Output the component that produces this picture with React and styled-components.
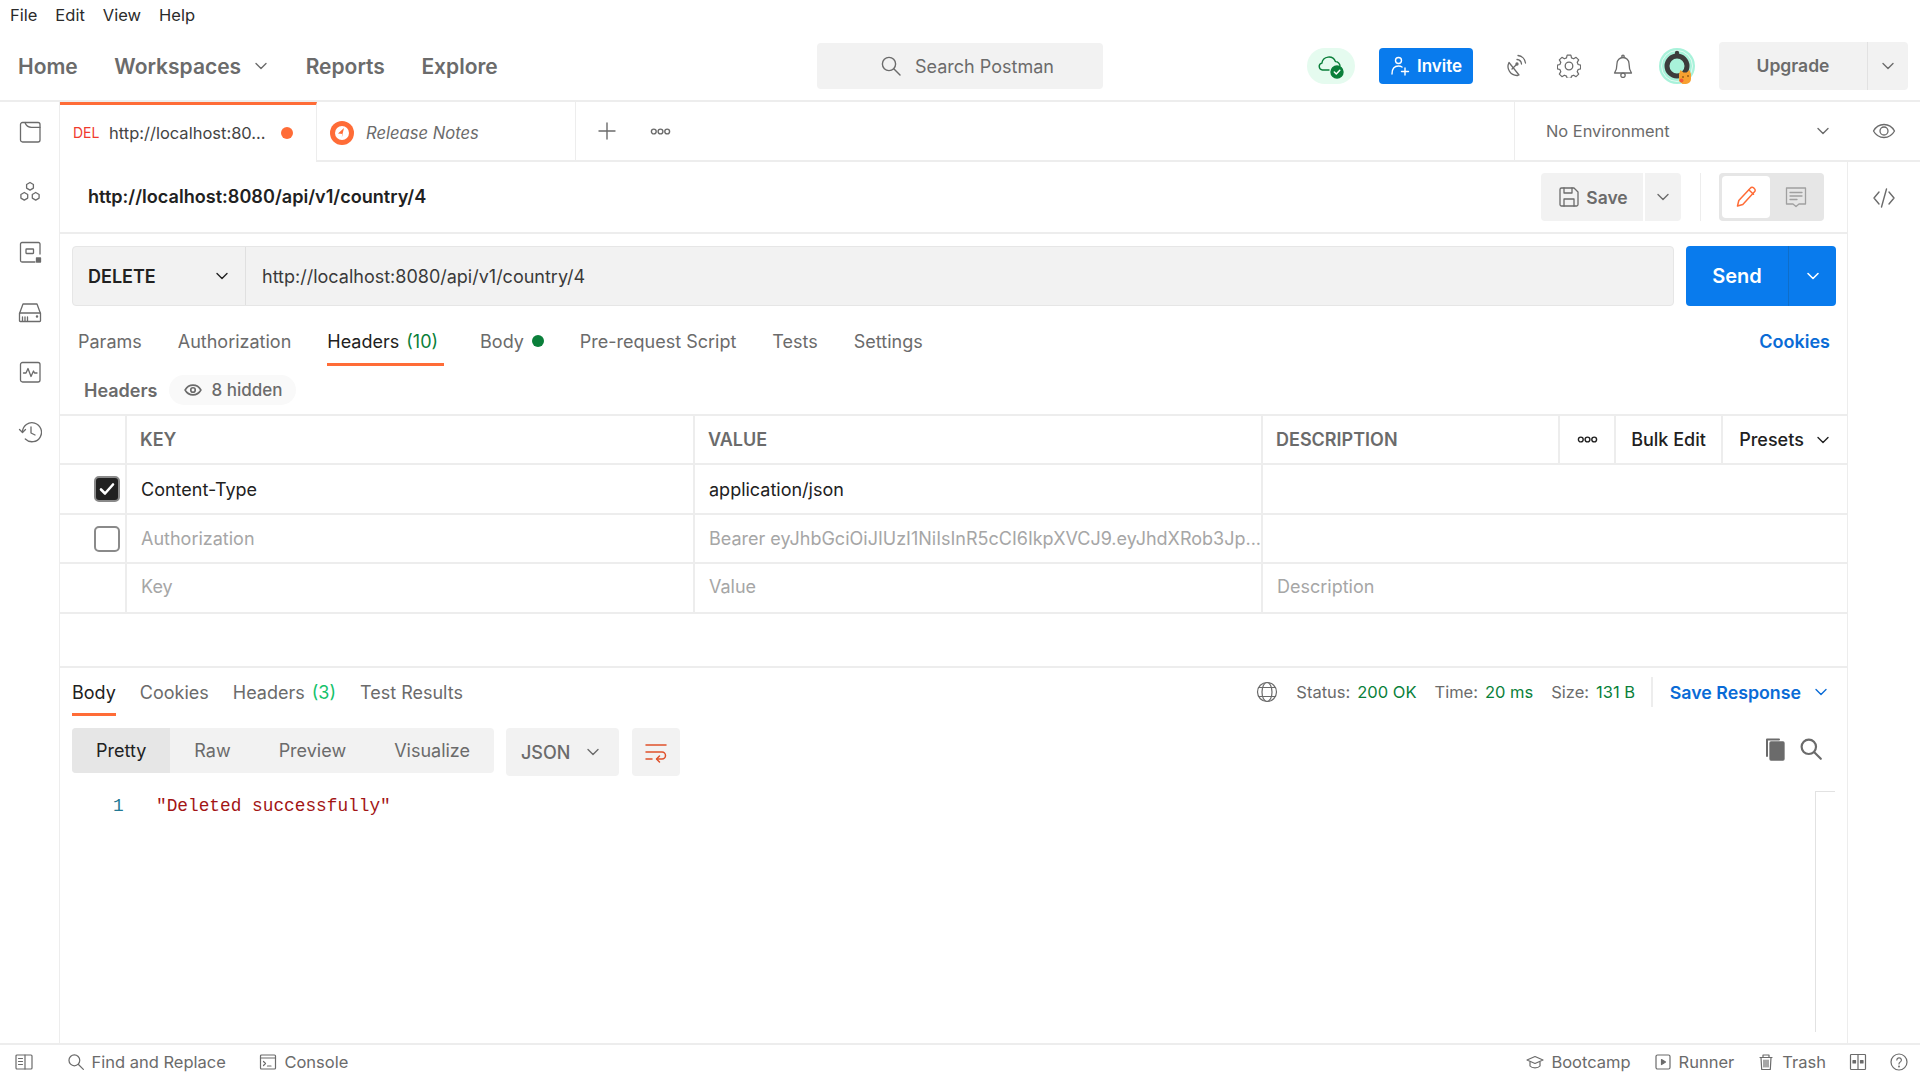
import React from "react";
import styled, { createGlobalStyle } from "styled-components";

const Global = createGlobalStyle`
  html, body { margin: 0; padding: 0; background: #fff; }
  body { font-family: Inter, "Noto Sans", sans-serif; color: #212121; font-size: 18px; }
  * { box-sizing: border-box; }
`;

const line = "#ededed";
const muted = "#6b6b6b";
const fill = "#f2f2f2";
const orange = "#ff6c37";

const App_ = styled.div`width: 1920px; height: 1080px; display: flex; flex-direction: column; overflow: hidden; background: #fff;`;

const MenuBar = styled.div`height: 30px; display: flex; align-items: center; gap: 18px; padding-left: 10px; font-size: 16.5px; color: #2b2b2b; flex: none;`;

const NavBar = styled.div`height: 72px; flex: none; display: flex; align-items: center; border-bottom: 2px solid ${line}; padding-top: 2px;`;
const NavLeft = styled.div`width: 817px; padding-left: 18px; display: flex; align-items: center; gap: 36.5px;`;
const NavLink = styled.div`font-size: 21px; font-weight: 600; color: ${muted}; display: flex; align-items: center; gap: 12px;`;
const SearchBox = styled.div`width: 286px; height: 46px; background: ${fill}; border-radius: 4px; display: flex; align-items: center; gap: 13px; padding-left: 63px; color: ${muted}; font-size: 18px;`;
const NavRight = styled.div`flex: 1; display: flex; align-items: center; justify-content: flex-end; gap: 24px; padding-right: 12px;`;
const SyncPill = styled.div`width: 48px; height: 36px; border-radius: 18px; background: #e5fbef; display: flex; align-items: center; justify-content: center;`;
const InviteBtn = styled.div`width: 94px; height: 36px; border-radius: 4px; background: #097bed; color: #fff; font-weight: 600; font-size: 17px; display: flex; align-items: center; justify-content: center; gap: 7px;`;
const IconGroup = styled.div`display: flex; gap: 30px; margin-left: 6px; color: ${muted};`;
const UpgradeGroup = styled.div`width: 189px; height: 48px; background: ${fill}; border-radius: 4px; display: flex; align-items: center; color: ${muted};`;
const UpgradeLabel = styled.div`width: 149px; text-align: center; font-weight: 600; font-size: 17.5px; border-right: 1px solid #e2e2e2; line-height: 48px;`;
const UpgradeCaret = styled.div`flex: 1; display: flex; justify-content: center;`;

const Body = styled.div`flex: 1; min-height: 0; display: flex;`;
const SideBar = styled.div`width: 60px; flex: none; border-right: 1.5px solid ${line}; color: ${muted};`;
const SideItem = styled.div`height: 60px; display: flex; align-items: center; justify-content: center;`;
const Main = styled.div`flex: 1; min-width: 0; display: flex; flex-direction: column;`;

const TabRow = styled.div`height: 60px; flex: none; display: flex;`;
const ActiveTab = styled.div`width: 257px; flex: none; border-top: 3px solid ${orange}; border-right: 1.5px solid ${line}; display: flex; align-items: center; padding: 0 0 2px 13px; font-size: 16.5px; color: #444;`;
const MethodTag = styled.span`color: #f03a2e; font-size: 14px; width: 36px;`;
const DirtyDot = styled.span`width: 12px; height: 12px; border-radius: 50%; background: ${orange}; margin-left: 15px;`;
const IdleTab = styled.div`width: 259px; flex: none; border-bottom: 2px solid ${line}; border-right: 1px solid ${line}; display: flex; align-items: center; padding: 3px 0 0 13px; gap: 12px; font-style: italic; font-size: 16.6px; color: ${muted};`;
const TabActions = styled.div`flex: 1; border-bottom: 2px solid ${line}; display: flex; align-items: center; gap: 34px; padding-left: 22px; color: ${muted};`;
const EnvSelect = styled.div`width: 334px; flex: none; border-left: 1px solid ${line}; border-bottom: 2px solid ${line}; display: flex; align-items: center; justify-content: space-between; padding: 0 17px 0 31px; font-size: 16.4px; color: ${muted};`;
const EyeBtn = styled.div`width: 72px; flex: none; border-bottom: 2px solid ${line}; display: flex; align-items: center; justify-content: center; color: ${muted};`;

const Content = styled.div`flex: 1; min-height: 0; display: flex;`;
const Center = styled.div`flex: 1; min-width: 0; display: flex; flex-direction: column;`;
const Rail = styled.div`width: 73px; flex: none; border-left: 1.5px solid ${line}; display: flex; justify-content: center; padding-top: 24px; color: ${muted};`;

const TitleRow = styled.div`height: 72px; flex: none; border-bottom: 2px solid ${line}; display: flex; align-items: center; padding: 0 23px 0 28px;`;
const TitleText = styled.div`font-weight: 600; font-size: 18.1px; color: #212121; flex: 1; padding-bottom: 2px;`;
const SaveBtn = styled.div`width: 102px; height: 48px; background: ${fill}; border-radius: 4px 0 0 4px; display: flex; align-items: center; justify-content: center; gap: 6px; padding-left: 3px; color: ${muted}; font-weight: 600; font-size: 17.5px;`;
const SaveCaret = styled.div`width: 36px; height: 48px; margin-left: 2px; background: ${fill}; border-radius: 0 4px 4px 0; display: flex; align-items: center; justify-content: center; color: ${muted};`;
const VDivider = styled.div`width: 1.5px; height: 48px; background: ${line}; margin: 0 18px 0 19px;`;
const ToggleGroup = styled.div`width: 105px; height: 48px; background: #e6e6e6; border-radius: 4px; display: flex; align-items: center; padding: 3px;`;
const ToggleOn = styled.div`width: 48px; height: 42px; background: #fff; border-radius: 4px; display: flex; align-items: center; justify-content: center;`;
const ToggleOff = styled.div`flex: 1; display: flex; align-items: center; justify-content: center; color: #a0a0a0;`;

const UrlRow = styled.div`flex: none; display: flex; padding: 12px 12px 0 12px; height: 72px; gap: 12px;`;
const UrlBox = styled.div`flex: 1; height: 60px; display: flex; border: 1.5px solid #e6e6e6; border-radius: 4px; background: ${fill};`;
const MethodSelect = styled.div`width: 173px; border-right: 1.5px solid #e0e0e0; display: flex; align-items: center; justify-content: space-between; padding: 0 15px; font-weight: 600; font-size: 18px; color: #212121;`;
const UrlInput = styled.div`flex: 1; display: flex; align-items: center; padding-left: 16px; font-size: 18px; color: #3a3a3a;`;
const SendGroup = styled.div`width: 150px; height: 60px; margin-right: -1px; background: #097bed; border-radius: 4px; display: flex; color: #fff;`;
const SendLabel = styled.div`width: 103px; border-right: 1px solid #0e6ec9; display: flex; align-items: center; justify-content: center; font-weight: 600; font-size: 20px;`;
const SendCaret = styled.div`flex: 1; display: flex; align-items: center; justify-content: center;`;

const ReqTabs = styled.div`height: 60px; flex: none; display: flex; align-items: stretch; gap: 36px; padding: 0 17px 0 18px;`;
const ReqTab = styled.div`display: flex; align-items: center; gap: 7px; padding: 13px ${p => (p.$active ? "6px" : "0")} 0 0; font-size: 18px; color: ${p => (p.$active ? "#212121" : muted)}; border-bottom: 3px solid ${p => (p.$active ? orange : "transparent")};`;
const Count = styled.span`color: ${p => p.$c || "#0a7f3a"};`;
const GreenDot = styled.span`width: 12px; height: 12px; background: #0a7f3a; border-radius: 50%; margin-left: 1px;`;
const CookiesLink = styled.div`margin-left: auto; color: #0a6bd6; font-weight: 600; font-size: 18px; display: flex; align-items: center; padding: 13px 0 3px;`;

const HeadersBar = styled.div`height: 48px; flex: none; display: flex; align-items: center; padding: 9px 0 9px 24px; gap: 11px;`;
const HeadersLabel = styled.div`font-weight: 600; font-size: 18px; color: ${muted};`;
const HiddenPill = styled.div`height: 30px; width: 127px; border-radius: 15px; background: #f9f9f9; display: flex; align-items: center; padding-left: 15px; gap: 10px; font-weight: 500; font-size: 17px; color: ${muted};`;

const Table = styled.div`flex: none; border-top: 2px solid ${line};`;
const Row = styled.div`display: grid; grid-template-columns: 67px 568px 568px 1fr; height: ${p => p.$h}px; border-bottom: 2px solid ${line};`;
const Cell = styled.div`display: flex; align-items: center; padding-left: 14px; padding-bottom: ${p => (p.$lift ? 3 : 0)}px; border-right: ${p => (p.$last ? "0" : `2px solid ${line}`)}; font-size: 18px; min-width: 0; white-space: nowrap; overflow: hidden; color: ${p => (p.$ph ? "#a6a6a6" : "#212121")};`;
const CheckCell = styled.div`display: flex; align-items: center; justify-content: flex-end; padding-right: 5px; border-right: 2px solid ${line};`;
const HeadCell = styled(Cell)`font-weight: 600; color: ${muted}; padding-left: 13px;`;
const HeadLast = styled.div`display: grid; grid-template-columns: 295px 56px 107px 1fr; min-width: 0;`;
const HeadTool = styled.div`display: flex; align-items: center; justify-content: center; gap: 11px; border-left: 2px solid ${line}; font-weight: 500; font-size: 18px; color: #212121;`;
const Check = styled.div`width: 26px; height: 26px; border-radius: 5px; border: 2px solid #8a8a8a; background: ${p => (p.$on ? "#212121" : "#fff")}; display: flex; align-items: center; justify-content: center;`;

const Response = styled.div`flex: 1; min-height: 0; margin-top: 52px; border-top: 2px solid ${line}; display: flex; flex-direction: column;`;
const ResBar = styled.div`height: 48px; flex: none; display: flex; align-items: stretch; gap: 24px; padding: 0 18px 0 12px;`;
const ResTab = styled.div`display: flex; align-items: center; gap: 7px; padding-top: 3px; font-size: 18px; color: ${p => (p.$active ? "#212121" : muted)}; border-bottom: 3px solid ${p => (p.$active ? orange : "transparent")};`;
const StatusBar = styled.div`margin-left: auto; display: flex; align-items: center; font-size: 16.5px; color: ${muted};`;
const StatusItem = styled.span`margin-left: ${p => p.$m || 18}px;`;
const Good = styled.span`color: #0a7f3a; margin-left: 7px;`;
const StatusDivider = styled.span`width: 1.5px; height: 30px; background: ${line}; margin: 0 17px 0 16px;`;
const SaveResponse = styled.div`display: flex; align-items: center; gap: 12px; color: #0a6bd6; font-weight: 600; font-size: 17.8px;`;

const FormatRow = styled.div`flex: none; margin-top: 12px; height: 48px; display: flex; align-items: flex-start; padding: 0 24px 0 12px; color: ${muted};`;
const FormatGroup = styled.div`height: 45px; width: 422px; background: ${fill}; border-radius: 4px; display: flex; overflow: hidden; font-size: 18px;`;
const FormatOpt = styled.div`display: flex; align-items: center; padding: 0 24px; color: ${p => (p.$active ? "#212121" : muted)}; background: ${p => (p.$active ? "#e6e6e6" : "transparent")};`;
const JsonSelect = styled.div`margin-left: 12px; width: 113px; height: 48px; background: ${fill}; border-radius: 4px; display: flex; align-items: center; padding-left: 15px; gap: 15px; font-weight: 500; font-size: 18px; color: ${muted};`;
const WrapBtn = styled.div`margin-left: 13px; width: 48px; height: 48px; background: ${fill}; border-radius: 4px; display: flex; align-items: center; justify-content: center;`;
const ToolIcons = styled.div`margin-left: auto; display: flex; gap: 12px; align-items: center; height: 42px;`;

const CodeArea = styled.div`flex: 1; min-height: 0; margin-top: 15px; display: flex; margin-bottom: 11px;`;
const Code = styled.div`flex: 1; padding-top: 4px; display: flex; font-family: "Liberation Mono", monospace; font-size: 17.8px; line-height: 22px;`;
const LineNo = styled.span`width: 43px; margin-left: 53px; color: #237893;`;
const Str = styled.span`color: #a31515;`;
const ScrollTrack = styled.div`width: 20px; margin-right: 12px; border-left: 1px solid #e2e2e2; border-top: 1px solid #e2e2e2;`;

const Footer = styled.div`height: 37px; flex: none; border-top: 2px solid ${line}; display: flex; align-items: center; justify-content: space-between; padding: 0 12px 1px 15px; font-size: 16.5px; color: ${muted};`;
const FootSide = styled.div`display: flex; align-items: center; gap: ${p => p.$gap}px;`;
const FootItem = styled.div`display: flex; align-items: center; gap: 7px;`;

const Ic = styled.svg`display: block; flex: none; fill: none; stroke: currentColor; stroke-width: ${p => p.$sw || 1.3}; stroke-linecap: round; stroke-linejoin: round;`;

const Icon = ({ s = 24, v = 24, sw, color, children }) => (
  <Ic width={s} height={s} viewBox={`0 0 ${v} ${v}`} $sw={sw} style={color ? { color } : undefined}>{children}</Ic>
);

const Chevron = ({ s = 16, sw = 1.4 }) => <Icon s={s} v={16} sw={sw}><path d="M3 5.500l5 5 5-5" /></Icon>;
const Dots = () => (
  <Icon s={21} v={21} sw={1.4}><circle cx="3.800" cy="10.500" r="2.400" /><circle cx="10.500" cy="10.500" r="2.400" /><circle cx="17.200" cy="10.500" r="2.400" /></Icon>
);
const Magnifier = ({ s = 22, sw = 1.4 }) => <Icon s={s} v={22} sw={sw}><circle cx="9" cy="9" r="6.600" /><path d="M14 14l6 6" /></Icon>;

const SideIcons = [
  <Icon key="a" s={24}><rect x="2.500" y="2.500" width="19.500" height="19.500" rx="2" /><path d="M7 2.500c1 3 3.500 4.800 6.500 4.800H22" /></Icon>,
  <Icon key="b" s={24}><path d="M12 2.500l3.400 2v3.600L12 10.100l-3.400-2V4.500z" /><path d="M6.300 12.500l3.400 2v3.600l-3.400 2-3.400-2v-3.600z" /><path d="M17.700 12.500l3.400 2v3.600l-3.400 2-3.400-2v-3.600z" /></Icon>,
  <Icon key="c" s={24}><path d="M22 14V4a1.500 1.500 0 0 0-1.500-1.500H4A1.500 1.500 0 0 0 2.500 4v16.500A1.500 1.500 0 0 0 4 22h13" /><rect x="8" y="9" width="7.500" height="4.500" rx=".5" /><rect x="18.500" y="18" width="4" height="4" fill="currentColor" /></Icon>,
  <Icon key="d" s={24}><path d="M1.500 13.500L5 4h14l3.500 9.500" /><rect x="1.500" y="13" width="21" height="8.500" rx=".8" /><path d="M4.500 21v-4M7 21v-4M9.500 21v-4" /><circle cx="19" cy="16.500" r=".6" fill="currentColor" /></Icon>,
  <Icon key="e" s={24}><rect x="2.500" y="2.500" width="19.500" height="19.500" rx="2" /><path d="M5.500 13h2.500l2-4.500 3 8 2.500-5.500 1 2h2.500" /></Icon>,
  <Icon key="f" s={24}><path d="M4.500 12a9.500 9.500 0 1 1 2.800 7" /><path d="M1.500 9.500l3 3 3-3" /><path d="M13 7v6l4 2" /></Icon>,
];

const Avatar = () => (
  <svg width="36" height="36" viewBox="0 0 36 36">
    <circle cx="18" cy="18" r="18" fill="#a8f2da" />
    <circle cx="18" cy="18" r="15.500" fill="none" stroke="#e2fbf2" strokeWidth="1" />
    <circle cx="18" cy="5" r="2.200" fill="#3c3c3c" />
    <circle cx="18" cy="18" r="10" fill="#a8f2da" stroke="#3c3c3c" strokeWidth="5" />
    <path d="M20 26l1.500-4 3 2.500h3l3-2.500 1.500 4v5a5 5 0 0 1-5 5h-3.500l-3.500-3z" fill="#f7a030" />
    <circle cx="24" cy="29" r=".8" fill="#5a3000" /><circle cx="29" cy="28" r=".8" fill="#5a3000" />
    <circle cx="22.500" cy="32.500" r="2" fill="#f0583a" />
  </svg>
);

export default function App() {
  return (
    <App_>
      <Global />
      <MenuBar><span>File</span><span>Edit</span><span>View</span><span>Help</span></MenuBar>
      <NavBar>
        <NavLeft>
          <NavLink>Home</NavLink>
          <NavLink>Workspaces <Chevron /></NavLink>
          <NavLink>Reports</NavLink>
          <NavLink>Explore</NavLink>
        </NavLeft>
        <SearchBox><Magnifier />Search Postman</SearchBox>
        <NavRight>
          <SyncPill>
            <Icon s={28} v={28} sw={1.4} color="#0a7f3a">
              <path d="M12 18H5.500a3.500 3.500 0 0 1-.6-6.900 7 7 0 0 1 13.500-1.500 4.500 4.500 0 0 1 4.600 4.500" />
              <circle cx="20" cy="20" r="6" fill="#0a7f3a" />
              <path d="M17.300 20l2 2 3.500-3.700" stroke="#fff" strokeWidth="1.500" />
            </Icon>
          </SyncPill>
          <InviteBtn>
            <Icon s={20} v={20} sw={1.4}><circle cx="8.500" cy="4.500" r="3" /><path d="M2 18c0-5 2.500-8 6.500-8 1.500 0 2.500.3 3.500 1" /><path d="M15 12v7M11.500 15.500h7" /></Icon>
            Invite
          </InviteBtn>
          <IconGroup>
            <Icon s={24}>
              <path d="M6 8.500a9 9 0 0 0 8.500 13 9 9 0 0 0 1.500-.5z" />
              <path d="M9 15l4.500-4.500" /><circle cx="14" cy="10" r="1" fill="currentColor" />
              <path d="M14 5.500a5 5 0 0 1 4.500 4.500M15 1.500a8.500 8.500 0 0 1 7.500 7.500" />
            </Icon>
            <Icon s={24}>
              <circle cx="12" cy="12" r="3.800" />
              <path d="M10 1.500h4l.7 3 2.300 1 2.600-1.600 2.800 2.800-1.600 2.600 1 2.300 2.700.7v4l-2.700.7-1 2.300 1.600 2.600-2.800 2.800-2.600-1.600-2.300 1-.7 2.400h-4l-.7-2.400-2.300-1-2.600 1.600-2.800-2.800 1.600-2.600-1-2.300-2.700-.7v-4l2.700-.7 1-2.300-1.600-2.600 2.800-2.800 2.600 1.600 2.300-1z" transform="translate(.85 -.3) scale(.93)" />
            </Icon>
            <Icon s={24}>
              <path d="M12 3.500a6 6 0 0 0-6 6c0 6-1.500 8-2.500 9.500h17c-1-1.500-2.500-3.500-2.500-9.500a6 6 0 0 0-6-6z" />
              <circle cx="12" cy="2.300" r="1.200" /><circle cx="12" cy="21.300" r="2.200" />
            </Icon>
          </IconGroup>
          <Avatar />
          <UpgradeGroup><UpgradeLabel>Upgrade</UpgradeLabel><UpgradeCaret><Chevron /></UpgradeCaret></UpgradeGroup>
        </NavRight>
      </NavBar>
      <Body>
        <SideBar>{SideIcons.map((ic, i) => <SideItem key={i}>{ic}</SideItem>)}</SideBar>
        <Main>
          <TabRow>
            <ActiveTab><MethodTag>DEL</MethodTag>http://localhost:80...<DirtyDot /></ActiveTab>
            <IdleTab>
              <Icon s={24} v={24}>
                <circle cx="12" cy="12" r="12" fill={orange} stroke="none" />
                <circle cx="12" cy="12" r="7" fill="#fff" stroke="none" />
                <path d="M14 7l-6 5.500 5 .5-1.500 4" fill={orange} stroke="none" />
              </Icon>
              Release Notes
            </IdleTab>
            <TabActions>
              <Icon s={18} v={18} sw={1.4}><path d="M9 1v16M1 9h16" /></Icon>
              <Dots />
            </TabActions>
            <EnvSelect>No Environment <Chevron /></EnvSelect>
            <EyeBtn>
              <Icon s={24}><path d="M1.500 12C4 7.500 7.500 5.500 12 5.500s8 2 10.500 6.500C20 16.500 16.500 18.500 12 18.500S4 16.500 1.500 12z" /><circle cx="12" cy="12" r="4" /></Icon>
            </EyeBtn>
          </TabRow>
          <Content>
            <Center>
              <TitleRow>
                <TitleText>http://localhost:8080/api/v1/country/4</TitleText>
                <SaveBtn>
                  <Icon s={22} v={22}><path d="M2 3.500A1.500 1.500 0 0 1 3.500 2H16l4 4v12.500a1.500 1.500 0 0 1-1.500 1.500h-15A1.500 1.500 0 0 1 2 18.500z" /><path d="M6 2v5h8V2" /><path d="M6 20v-7h10v7" /></Icon>
                  Save
                </SaveBtn>
                <SaveCaret><Chevron /></SaveCaret>
                <VDivider />
                <ToggleGroup>
                  <ToggleOn>
                    <Icon s={24} sw={1.5} color={orange}><path d="M3.500 21l1.300-5.500L16.500 3a2 2 0 0 1 3-.2l1 1a2 2 0 0 1 0 3L8.800 19.500z" /><path d="M15 5l4.500 4.300" /></Icon>
                  </ToggleOn>
                  <ToggleOff>
                    <Icon s={24}><path d="M2.500 3h19v16H15l-3 2.500L9 19H2.500z" /><path d="M6 7.500h12M6 11h12M6 14.500h7" /></Icon>
                  </ToggleOff>
                </ToggleGroup>
              </TitleRow>
              <UrlRow>
                <UrlBox>
                  <MethodSelect>DELETE <Chevron /></MethodSelect>
                  <UrlInput>http://localhost:8080/api/v1/country/4</UrlInput>
                </UrlBox>
                <SendGroup>
                  <SendLabel>Send</SendLabel>
                  <SendCaret><Chevron s={16} sw={1.6} /></SendCaret>
                </SendGroup>
              </UrlRow>
              <ReqTabs>
                <ReqTab>Params</ReqTab>
                <ReqTab>Authorization</ReqTab>
                <ReqTab $active>Headers <Count>(10)</Count></ReqTab>
                <ReqTab>Body <GreenDot /></ReqTab>
                <ReqTab>Pre-request Script</ReqTab>
                <ReqTab>Tests</ReqTab>
                <ReqTab>Settings</ReqTab>
                <CookiesLink>Cookies</CookiesLink>
              </ReqTabs>
              <HeadersBar>
                <HeadersLabel>Headers</HeadersLabel>
                <HiddenPill>
                  <Icon s={18} v={24} sw={2.2}><path d="M1.500 12C4 7.500 7.500 5.500 12 5.500s8 2 10.500 6.500C20 16.500 16.500 18.500 12 18.500S4 16.500 1.500 12z" /><circle cx="12" cy="12" r="3" /></Icon>
                  8 hidden
                </HiddenPill>
              </HeadersBar>
              <Table>
                <Row $h={49}>
                  <CheckCell />
                  <HeadCell>KEY</HeadCell>
                  <HeadCell>VALUE</HeadCell>
                  <HeadLast>
                    <HeadCell $last>DESCRIPTION</HeadCell>
                    <HeadTool><Dots /></HeadTool>
                    <HeadTool>Bulk Edit</HeadTool>
                    <HeadTool>Presets <Chevron /></HeadTool>
                  </HeadLast>
                </Row>
                <Row $h={50}>
                  <CheckCell>
                    <Check $on>
                      <Icon s={18} v={18} sw={2.6} color="#fff"><path d="M3 9.500l4 4 8-9" /></Icon>
                    </Check>
                  </CheckCell>
                  <Cell>Content-Type</Cell>
                  <Cell>application/json</Cell>
                  <Cell $last />
                </Row>
                <Row $h={49}>
                  <CheckCell><Check /></CheckCell>
                  <Cell $ph>Authorization</Cell>
                  <Cell $ph>Bearer eyJhbGciOiJIUzI1NiIsInR5cCI6IkpXVCJ9.eyJhdXRob3Jp...</Cell>
                  <Cell $last />
                </Row>
                <Row $h={50}>
                  <CheckCell />
                  <Cell $ph $lift>Key</Cell>
                  <Cell $ph $lift>Value</Cell>
                  <Cell $ph $last $lift>Description</Cell>
                </Row>
              </Table>
              <Response>
                <ResBar>
                  <ResTab $active>Body</ResTab>
                  <ResTab>Cookies</ResTab>
                  <ResTab>Headers <Count $c="#15c26b">(3)</Count></ResTab>
                  <ResTab>Test Results</ResTab>
                  <StatusBar>
                    <Icon s={22} v={22} sw={1.2}><circle cx="11" cy="11" r="9.500" /><ellipse cx="11" cy="11" rx="5" ry="9.500" /><path d="M2.500 6.500h17M2.500 15.500h17" /></Icon>
                    <StatusItem>Status:<Good>200 OK</Good></StatusItem>
                    <StatusItem>Time:<Good>20 ms</Good></StatusItem>
                    <StatusItem>Size:<Good>131 B</Good></StatusItem>
                    <StatusDivider />
                    <SaveResponse>Save Response <Chevron /></SaveResponse>
                  </StatusBar>
                </ResBar>
                <FormatRow>
                  <FormatGroup>
                    <FormatOpt $active>Pretty</FormatOpt>
                    <FormatOpt>Raw</FormatOpt>
                    <FormatOpt>Preview</FormatOpt>
                    <FormatOpt>Visualize</FormatOpt>
                  </FormatGroup>
                  <JsonSelect>JSON <Chevron /></JsonSelect>
                  <WrapBtn>
                    <Icon s={24} sw={1.5} color="#e0512b"><path d="M2 5h20M2 12h16a3.500 3.500 0 0 1 0 7h-5M2 19h6" /><path d="M15.500 16l-3 3 3 3" /></Icon>
                  </WrapBtn>
                  <ToolIcons>
                    <Icon s={24}>
                      <rect x="7" y="5" width="14" height="18" rx="1" fill="currentColor" />
                      <path d="M4 19V2.500h12" strokeWidth="2" />
                    </Icon>
                    <Magnifier s={24} sw={2} />
                  </ToolIcons>
                </FormatRow>
                <CodeArea>
                  <Code><LineNo>1</LineNo><Str>"Deleted successfully"</Str></Code>
                  <ScrollTrack />
                </CodeArea>
              </Response>
            </Center>
            <Rail>
              <Icon s={24} sw={1.4}><path d="M7 6l-5 6 5 6M17 6l5 6-5 6M14.500 3l-5 18" /></Icon>
            </Rail>
          </Content>
        </Main>
      </Body>
      <Footer>
        <FootSide $gap={33.5}>
          <Icon s={18} v={18} sw={1.2}><rect x="1" y="2" width="16" height="14" rx="1" /><path d="M10 2v14M3.500 5.500h4M3.500 8.500h4M3.500 11.500h4" /></Icon>
          <FootItem><Magnifier s={18} sw={1.500} />Find and Replace</FootItem>
          <FootItem><Icon s={18} v={18} sw={1.2}><rect x="1.500" y="2" width="15" height="14" rx="1" /><path d="M1.500 5h15" /><path d="M4.500 8.500l2 2-2 2M8.500 13h3.500" /></Icon>Console</FootItem>
        </FootSide>
        <FootSide $gap={23}>
          <FootItem><Icon s={18} v={18} sw={1.2}><path d="M1 7l8-3.500L17 7l-8 3.500z" /><path d="M4 9v4c2 2.500 8 2.500 10 0V9" /></Icon>Bootcamp</FootItem>
          <FootItem><Icon s={18} v={18} sw={1.2}><rect x="2" y="2" width="14" height="14" rx="1.500" /><path d="M7.500 6.500l4 2.500-4 2.500z" fill="currentColor" /></Icon>Runner</FootItem>
          <FootItem><Icon s={18} v={18} sw={1.2}><path d="M3 4.500h12M6 4.500V2h6v2.500M4 4.500l.7 12h8.600l.7-12M7 7v7M9 7v7M11 7v7" /></Icon>Trash</FootItem>
          <Icon s={18} v={18} sw={1.2}><rect x="1.500" y="1.500" width="15" height="15" rx=".8" /><path d="M9 1.500v15" /><rect x="4" y="7.500" width="2.500" height="2.500" fill="currentColor" /><rect x="11.500" y="7.500" width="2.500" height="2.500" fill="currentColor" /></Icon>
          <Icon s={18} v={18} sw={1.2}><circle cx="9" cy="9" r="8" /><path d="M6.800 7a2.300 2.300 0 1 1 3.200 2.200c-.8.400-1 .9-1 1.800" /><circle cx="9" cy="13.500" r=".4" /></Icon>
        </FootSide>
      </Footer>
    </App_>
  );
}
